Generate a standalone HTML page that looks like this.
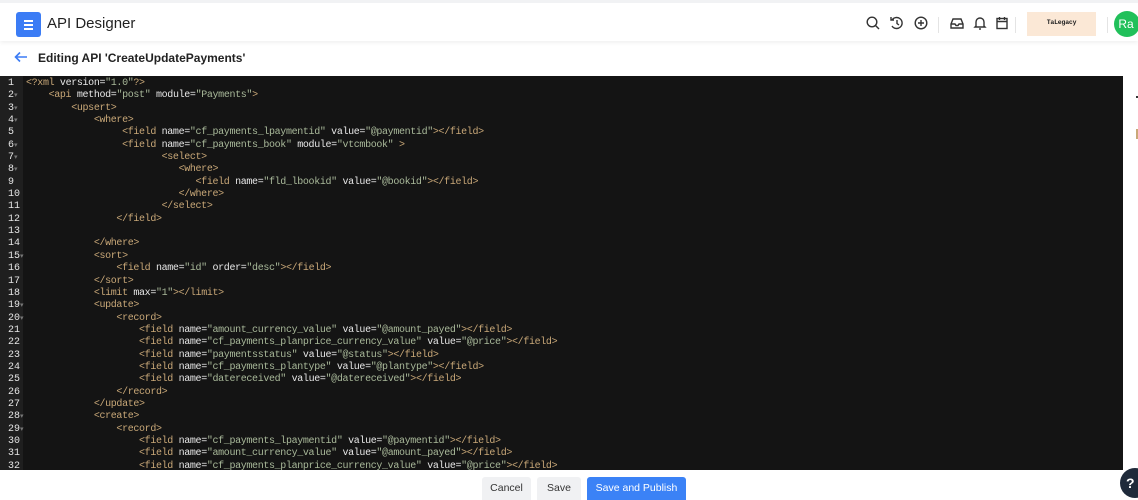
<!DOCTYPE html>
<html><head><meta charset="utf-8"><style>
*{margin:0;padding:0;box-sizing:border-box}
body{width:1138px;height:500px;overflow:hidden;background:#fff;font-family:"Liberation Sans",sans-serif;position:relative}
.hdr{position:absolute;left:0;top:0;width:1138px;height:41px;background:#fff;border-top:3px solid #f1f2f4;box-shadow:0 2px 4px rgba(0,0,0,.06)}
.menu{position:absolute;left:16px;top:9px;width:25px;height:25px;background:#3b7cf5;border-radius:3px}
.menu i{position:absolute;left:8px;width:9px;height:1.6px;background:#fff}
.title{position:absolute;left:47px;top:12px;font-size:15px;color:#222}
.ic{position:absolute;top:12px}
.sep{position:absolute;top:14px;width:1px;height:16px;background:#e4e4e4}
.logo{position:absolute;left:1027px;top:9px;width:69px;height:24px;background:#fbe8d6;font-size:6.5px;font-weight:bold;text-align:center;line-height:22px;font-family:"Liberation Mono",monospace;letter-spacing:-.2px;color:#222}
.av{position:absolute;left:1114px;top:8px;width:26px;height:26px;border-radius:50%;background:#21c05a;color:#fff;font-size:12px;line-height:26px;text-align:center;text-indent:-2px}
.sub{position:absolute;left:38px;top:51px;font-size:12px;font-weight:bold;color:#222}
.ed{position:absolute;left:0;top:76px;width:1123px;height:394px;background:#141414;overflow:hidden}
.gut{position:absolute;left:0;top:0;width:23px;height:394px;background:#1f1f1f}
pre{position:absolute;top:2px;font-family:"Liberation Mono",monospace;font-size:10px;letter-spacing:-.35px;line-height:12.35px;white-space:pre}
.num{left:0;width:23px;color:#e6e6e6;padding-left:8px;letter-spacing:0}
.num s{text-decoration:none;color:#777;font-size:7px;display:inline-block;height:0;line-height:0;vertical-align:top;margin-top:6px}
.code{left:26px;color:#e8e8e8}
.t{color:#c9a878}.s{color:#a9b99a}
.btn{position:absolute;top:477px;height:23px;font-size:10.5px;line-height:23px;text-align:center;border-radius:3px 3px 0 0}
</style></head><body>
<div class="hdr">
<div class="menu"><i style="top:8px"></i><i style="top:12px"></i><i style="top:16px"></i></div>
<div class="title">API Designer</div>
<svg class="ic" style="left:865px" width="16" height="16" viewBox="0 0 16 16" fill="none" stroke="#333" stroke-width="1.4"><circle cx="7" cy="7" r="4.8"/><path d="M10.5 10.5L14 14"/></svg>
<svg class="ic" style="left:889px" width="16" height="16" viewBox="0 0 16 16" fill="none" stroke="#333" stroke-width="1.4"><path d="M3 5A5.5 5.5 0 1 1 3 11"/><path d="M2 2v3h3"/><path d="M8 5v3.5l2 1.5"/></svg>
<svg class="ic" style="left:913px" width="16" height="16" viewBox="0 0 16 16" fill="none" stroke="#333" stroke-width="1.4"><circle cx="8" cy="8" r="5.8"/><path d="M8 5v6M5 8h6"/></svg>
<div class="sep" style="left:938px"></div>
<svg class="ic" style="left:949px" width="16" height="16" viewBox="0 0 16 16" fill="none" stroke="#333" stroke-width="1.4"><path d="M2 9l2-5h8l2 5v4H2z"/><path d="M2 9h4l1 1.5h2L10 9h4"/></svg>
<svg class="ic" style="left:972px" width="16" height="16" viewBox="0 0 16 16" fill="none" stroke="#333" stroke-width="1.4"><path d="M4 11V7a4 4 0 0 1 8 0v4l1 1H3z"/><path d="M7 14h2"/></svg>
<svg class="ic" style="left:994px" width="16" height="16" viewBox="0 0 16 16" fill="none" stroke="#333" stroke-width="1.4"><rect x="3" y="3.5" width="10" height="10"/><path d="M3 6.5h10M5.5 2v3M10.5 2v3"/></svg>
<div class="sep" style="left:1015px"></div>
<div class="logo">TaLegacy</div>
<div class="sep" style="left:1107px"></div>
<div class="av">Ra</div>
</div>
<svg style="position:absolute;left:14px;top:51px" width="14" height="12" viewBox="0 0 14 12" fill="none" stroke="#3b7cf5" stroke-width="1.6"><path d="M13 6H2M6 1.5L1.5 6 6 10.5"/></svg>
<div class="sub">Editing API 'CreateUpdatePayments'</div>
<div class="ed"><div class="gut"></div>
<pre class="num">1
2<s>▾</s>
3<s>▾</s>
4<s>▾</s>
5
6<s>▾</s>
7<s>▾</s>
8<s>▾</s>
9
10
11
12
13
14
15<s>▾</s>
16
17
18
19<s>▾</s>
20<s>▾</s>
21
22
23
24
25
26
27
28<s>▾</s>
29<s>▾</s>
30
31
32</pre>
<pre class="code"><span class="t">&lt;?xml</span> version=<span class="s">"1.0"</span><span class="t">?&gt;</span>
    <span class="t">&lt;api</span> method=<span class="s">"post"</span> module=<span class="s">"Payments"</span><span class="t">&gt;</span>
        <span class="t">&lt;upsert&gt;</span>
            <span class="t">&lt;where&gt;</span>
                 <span class="t">&lt;field</span> name=<span class="s">"cf_payments_lpaymentid"</span> value=<span class="s">"@paymentid"</span><span class="t">&gt;&lt;/field&gt;</span>
                 <span class="t">&lt;field</span> name=<span class="s">"cf_payments_book"</span> module=<span class="s">"vtcmbook"</span> <span class="t">&gt;</span>
                        <span class="t">&lt;select&gt;</span>
                           <span class="t">&lt;where&gt;</span>
                              <span class="t">&lt;field</span> name=<span class="s">"fld_lbookid"</span> value=<span class="s">"@bookid"</span><span class="t">&gt;&lt;/field&gt;</span>
                           <span class="t">&lt;/where&gt;</span>
                        <span class="t">&lt;/select&gt;</span>
                <span class="t">&lt;/field&gt;</span>

            <span class="t">&lt;/where&gt;</span>
            <span class="t">&lt;sort&gt;</span>
                <span class="t">&lt;field</span> name=<span class="s">"id"</span> order=<span class="s">"desc"</span><span class="t">&gt;&lt;/field&gt;</span>
            <span class="t">&lt;/sort&gt;</span>
            <span class="t">&lt;limit</span> max=<span class="s">"1"</span><span class="t">&gt;&lt;/limit&gt;</span>
            <span class="t">&lt;update&gt;</span>
                <span class="t">&lt;record&gt;</span>
                    <span class="t">&lt;field</span> name=<span class="s">"amount_currency_value"</span> value=<span class="s">"@amount_payed"</span><span class="t">&gt;&lt;/field&gt;</span>
                    <span class="t">&lt;field</span> name=<span class="s">"cf_payments_planprice_currency_value"</span> value=<span class="s">"@price"</span><span class="t">&gt;&lt;/field&gt;</span>
                    <span class="t">&lt;field</span> name=<span class="s">"paymentsstatus"</span> value=<span class="s">"@status"</span><span class="t">&gt;&lt;/field&gt;</span>
                    <span class="t">&lt;field</span> name=<span class="s">"cf_payments_plantype"</span> value=<span class="s">"@plantype"</span><span class="t">&gt;&lt;/field&gt;</span>
                    <span class="t">&lt;field</span> name=<span class="s">"datereceived"</span> value=<span class="s">"@datereceived"</span><span class="t">&gt;&lt;/field&gt;</span>
                <span class="t">&lt;/record&gt;</span>
            <span class="t">&lt;/update&gt;</span>
            <span class="t">&lt;create&gt;</span>
                <span class="t">&lt;record&gt;</span>
                    <span class="t">&lt;field</span> name=<span class="s">"cf_payments_lpaymentid"</span> value=<span class="s">"@paymentid"</span><span class="t">&gt;&lt;/field&gt;</span>
                    <span class="t">&lt;field</span> name=<span class="s">"amount_currency_value"</span> value=<span class="s">"@amount_payed"</span><span class="t">&gt;&lt;/field&gt;</span>
                    <span class="t">&lt;field</span> name=<span class="s">"cf_payments_planprice_currency_value"</span> value=<span class="s">"@price"</span><span class="t">&gt;&lt;/field&gt;</span></pre>
</div>
<div style="position:absolute;left:1136px;top:96px;width:2px;height:2px;background:#333"></div>
<div style="position:absolute;left:1136px;top:129px;width:2px;height:10px;background:#c9a878"></div>
<div class="btn" style="left:482px;width:49px;background:#f0f1f3;color:#333">Cancel</div>
<div class="btn" style="left:537px;width:44px;background:#f0f1f3;color:#333">Save</div>
<div class="btn" style="left:587px;width:99px;background:#3b82f6;color:#fff">Save and Publish</div>
<div style="position:absolute;left:1120px;top:468px;width:30px;height:30px;border-radius:50%;background:#1f2a3a;color:#fff;font-size:14px;font-weight:bold;line-height:30px;text-indent:6px">?</div>
</body></html>
